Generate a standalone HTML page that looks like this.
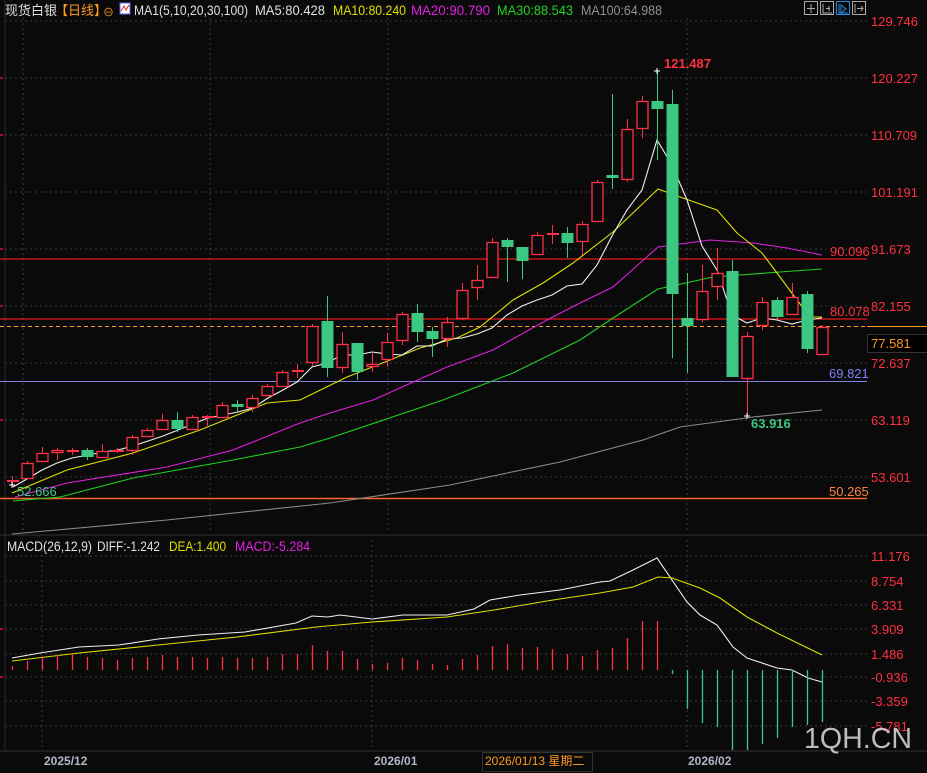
<!DOCTYPE html>
<html><head><meta charset="utf-8"><style>
html,body{margin:0;padding:0;background:#0a0a0a;width:927px;height:773px;overflow:hidden}
svg{display:block}
text{font-family:"Liberation Sans","Noto Sans CJK SC",sans-serif}
</style></head><body>
<svg id="s" width="927" height="773" viewBox="0 0 927 773" xmlns="http://www.w3.org/2000/svg">
<rect width="927" height="773" fill="#0a0a0a"/>
<g stroke="#3a3a3a" stroke-dasharray="2,3" stroke-width="1">
<line x1="5" y1="21" x2="867" y2="21"/><line x1="5" y1="78" x2="867" y2="78"/>
<line x1="5" y1="135" x2="867" y2="135"/><line x1="5" y1="192" x2="867" y2="192"/>
<line x1="5" y1="249" x2="867" y2="249"/><line x1="5" y1="306" x2="867" y2="306"/>
<line x1="5" y1="363" x2="867" y2="363"/><line x1="5" y1="420" x2="867" y2="420"/>
<line x1="5" y1="477" x2="867" y2="477"/>
<line x1="5" y1="556" x2="867" y2="556"/><line x1="5" y1="581" x2="867" y2="581"/>
<line x1="5" y1="605" x2="867" y2="605"/><line x1="5" y1="629" x2="867" y2="629"/>
<line x1="5" y1="654" x2="867" y2="654"/><line x1="5" y1="677" x2="867" y2="677"/>
<line x1="5" y1="701" x2="867" y2="701"/><line x1="5" y1="726" x2="867" y2="726"/>
<line x1="23" y1="18" x2="23" y2="530"/><line x1="210" y1="18" x2="210" y2="530"/><line x1="388" y1="18" x2="388" y2="530"/><line x1="687" y1="18" x2="687" y2="530"/>
<line x1="42" y1="540" x2="42" y2="750"/><line x1="372" y1="540" x2="372" y2="750"/><line x1="687" y1="540" x2="687" y2="750"/>
</g>
<line x1="5" y1="0" x2="5" y2="750" stroke="#2a2a2a"/>
<line x1="0" y1="535" x2="927" y2="535" stroke="#333"/>
<line x1="0" y1="751" x2="927" y2="751" stroke="#333"/>
<g fill="#b01020"><rect x="0" y="77" width="3" height="2"/><rect x="0" y="134" width="3" height="2"/><rect x="0" y="248" width="3" height="2"/><rect x="0" y="305" width="3" height="2"/><rect x="0" y="419" width="3" height="2"/><rect x="0" y="628" width="3" height="2"/><rect x="0" y="676" width="3" height="2"/></g>

<line x1="0" y1="259" x2="867" y2="259" stroke="#e81818" stroke-width="1.3"/>
<line x1="0" y1="319" x2="867" y2="319" stroke="#e81818" stroke-width="1.3"/>
<line x1="0" y1="326.5" x2="867" y2="326.5" stroke="#ff9a20" stroke-dasharray="4,3"/>
<line x1="867" y1="326.5" x2="927" y2="326.5" stroke="#ff9a20"/>
<line x1="0" y1="381.5" x2="867" y2="381.5" stroke="#8080e0"/>
<line x1="0" y1="498.5" x2="867" y2="498.5" stroke="#ff6030" stroke-width="1.5"/>

<g id="ma" fill="none" stroke-width="1.1"></g>
<g id="cd"></g>
<g id="mb"></g>

<g font-size="13" fill="#ff3040">
<text x="871" y="26">129.746</text><text x="871" y="83">120.227</text>
<text x="871" y="140">110.709</text><text x="871" y="197">101.191</text>
<text x="871" y="254">91.673</text><text x="871" y="311">82.155</text>
<text x="871" y="368">72.637</text><text x="871" y="425">63.119</text>
<text x="871" y="482">53.601</text>
<text x="871" y="561">11.176</text><text x="871" y="586">8.754</text>
<text x="871" y="610">6.331</text><text x="871" y="634">3.909</text>
<text x="871" y="659">1.486</text><text x="871" y="682">-0.936</text>
<text x="871" y="706">-3.359</text><text x="871" y="731">-5.781</text>
<text x="830" y="256">90.096</text><text x="830" y="316">80.078</text>
<text x="664" y="68" font-weight="bold">121.487</text>
</g>
<text x="829" y="378" font-size="13" fill="#8080ff">69.821</text>
<text x="829" y="496" font-size="13" fill="#ff8040">50.265</text>
<text x="751" y="428" font-size="13" fill="#3cc882" font-weight="bold">63.916</text>
<text x="17" y="496" font-size="13" fill="#3cc882">52.666</text>
<rect x="867.5" y="334.5" width="60" height="18" fill="#000" stroke="#333"/>
<text x="871" y="348" font-size="13" fill="#ff9a20">77.581</text>

<text x="5" y="15" font-size="13" fill="#e0e0e0">现货白银</text>
<text x="55" y="15" font-size="13" fill="#ff9a20">【日线】</text>
<text x="103" y="16" font-size="11" fill="#ff9a20">⊖</text>
<rect x="120" y="3" width="10" height="11" fill="#fff" stroke="#6060ff"/><path d="M121 11 L124 6 L126 10 L129 5" stroke="#e02020" fill="none"/>
<g font-size="13.5">
<text x="134" y="15" fill="#e0e0e0" textLength="114" lengthAdjust="spacingAndGlyphs">MA1(5,10,20,30,100)</text>
<text x="255" y="15" fill="#e0e0e0" textLength="70" lengthAdjust="spacingAndGlyphs">MA5:80.428</text>
<text x="333" y="15" fill="#e0e000" textLength="73" lengthAdjust="spacingAndGlyphs">MA10:80.240</text>
<text x="411" y="15" fill="#e020e0" textLength="79" lengthAdjust="spacingAndGlyphs">MA20:90.790</text>
<text x="497" y="15" fill="#20d020" textLength="76" lengthAdjust="spacingAndGlyphs">MA30:88.543</text>
<text x="581" y="15" fill="#909090" textLength="81" lengthAdjust="spacingAndGlyphs">MA100:64.988</text>
<text x="7" y="551" fill="#e0e0e0" textLength="85" lengthAdjust="spacingAndGlyphs">MACD(26,12,9)</text>
<text x="97" y="551" fill="#e0e0e0" textLength="63" lengthAdjust="spacingAndGlyphs">DIFF:-1.242</text>
<text x="169" y="551" fill="#e0e000" textLength="57" lengthAdjust="spacingAndGlyphs">DEA:1.400</text>
<text x="235" y="551" fill="#e020e0" textLength="75" lengthAdjust="spacingAndGlyphs">MACD:-5.284</text>
</g>
<g fill="none" stroke="#aaa">
<rect x="804.5" y="1.5" width="13" height="13"/><path d="M811 4v9M807 8.5h8"/>
<rect x="820.5" y="1.5" width="13" height="13"/><path d="M823 4v9h9M826 8.5h4M829 6v5"/>
<rect x="836.5" y="1.5" width="13" height="13" stroke="#2a8ae0"/><path d="M839 4v9h9M841 5l5 4-5 4z" stroke="#2a8ae0"/>
<rect x="852.5" y="1.5" width="13" height="13"/><path d="M855 4v9M857 8.5h6M861 6l2 2.5-2 2.5"/>
</g>
<g font-size="12" font-weight="bold" fill="#b0b8c8">
<text x="44" y="765">2025/12</text><text x="374" y="765">2026/01</text><text x="688" y="765">2026/02</text>
</g>
<rect x="482.5" y="752.5" width="110" height="19" fill="#0a0a0a" stroke="#333"/>
<text x="485" y="765" font-size="12" fill="#ff9a20">2026/01/13 星期二</text>
<text x="804" y="748" font-size="29" fill="#dcdcdc" fill-opacity="0.85" textLength="108" lengthAdjust="spacingAndGlyphs">1QH.CN</text>
</svg>
<script>
var NS="http://www.w3.org/2000/svg";
function el(p,t,a){var e=document.createElementNS(NS,t);for(var k in a)e.setAttribute(k,a[k]);p.appendChild(e);return e;}
var ma=document.getElementById('ma');
function pl(c,pts){el(ma,'polyline',{points:pts,stroke:c});}
pl('#8a8a8a','12,534 167,520 330,503 450,485 560,462 643,440 680,427 753,417 822,410');
pl('#20d020','13,501 60,497 133,478 233,460 300,447 330,438 443,400 513,373 580,340 613,318 658,289 713,277 780,272 822,269');
pl('#e020e0','15,497 67,483 167,467 233,450 300,423 330,413 373,400 447,367 493,350 547,320 580,303 613,287 658,247 710,240 753,243 787,248 822,255');
pl('#e0e000','12,493 67,470 133,453 200,430 267,403 300,400 347,377 390,360 420,348 457,338 480,327 513,300 543,283 573,263 613,232 658,189 680,197 717,210 737,233 762,253 780,277 797,300 810,317 822,317');
pl('#f0f0f0','13,487 27,479 42,470 57,463 72,458 88,455 103,452 118,450 133,446 148,441 163,436 178,430 193,424 208,418 223,415 238,412 253,408 268,398 283,390 297,382 312,367 327,363 342,355 357,355 372,352 387,354 402,355 417,346 432,346 447,339 462,338 477,334 492,328 507,315 522,306 537,300 552,295 567,286 582,284 597,265 612,236 627,210 642,190 657,140 672,165 687,200 702,246 717,270 732,315 747,323 762,318 777,320 792,324 807,320 822,318');
pl('#f0f0f0','12,658 40,653 79,647 119,645 158,639 198,635 245,632 296,623 312,616 328,617 340,615 372,619 403,615 447,615 474,609 490,600 520,595 560,590 600,582 610,581 633,570 657,558 687,602 700,615 717,625 733,647 747,658 777,668 792,670 808,678 822,682');
pl('#e0e000','12,661 79,653 158,645 237,637 316,627 372,622 447,617 494,610 553,600 600,593 633,587 658,577 672,578 700,588 720,598 747,617 777,633 822,655');
var C=[['r',480,482,476,486],['r',463,479,461,479],['r',453,462,447,462],['r',450,453,448,460],['r',450,452,448,455],['g',450,457,448,460],['r',451,458,444,458],['r',450,452,448,453],['r',437,451,435,455],['r',430,437,428,437],['r',420,430,414,430],['g',420,429,412,432],['r',417,430,415,430],['r',416,418,415,426],['r',405,418,402,418],['g',404,407,400,412],['r',398,408,395,412],['r',386,396,384,396],['r',372,387,370,387],['r',370,372,364,378],['r',326,363,324,366],['g',321,368,296,377],['r',344,368,332,373],['g',343,372,343,380],['r',364,367,353,372],['r',342,360,333,367],['r',314,341,312,345],['g',313,332,304,342],['g',331,339,327,357],['r',322,339,317,347],['r',290,319,283,320],['r',280,288,265,300],['r',242,278,238,278],['g',240,247,238,282],['g',247,261,247,279],['r',235,255,232,255],['r',233,235,225,244],['g',233,243,227,258],['r',224,242,221,255],['r',182,222,180,222],['g',175,178,94,189],['r',129,180,119,182],['r',101,129,96,138],['g',101,109,71,160],['g',104,294,90,358],['g',318,326,273,373],['r',291,320,265,322],['r',273,287,248,300],['g',271,377,260,377],['r',336,379,332,416],['r',302,326,297,330],['g',300,317,297,319],['r',297,315,283,315],['g',294,349,291,353],['r',327,355,325,355]];
var cd=document.getElementById('cd');
C.forEach(function(c,i){var x=12+i*15;var col=c[0]=='r'?'#ff3048':'#3cc882';
 el(cd,'line',{x1:x+.5,y1:c[3],x2:x+.5,y2:c[4],stroke:col});
 var h=c[2]-c[1];
 if(c[0]=='r'){ if(h<=2) el(cd,'rect',{x:x-5,y:c[1],width:12,height:Math.max(h,2),fill:col});
  else el(cd,'rect',{x:x-5,y:c[1]+.5,width:11,height:h-1,fill:'#0a0a0a',stroke:col,'stroke-width':1.3});}
 else el(cd,'rect',{x:x-5.5,y:c[1],width:12,height:Math.max(h,2),fill:col});
});
el(cd,'path',{d:'M654 71h6M657 68v6M744 416h6M747 413v6',stroke:'#fff'});
el(cd,'path',{d:'M9 485h6M12 482v6',stroke:'#fff'});
var T=[666,661,657,655,654,657,658,660,658,657,655,657,657,658,657,658,658,657,654,654,645,651,651,659,664,663,658,660,664,665,659,655,646,644,648,647,649,654,656,650,648,638,621,621];
var mb=document.getElementById('mb');
T.forEach(function(t,i){var x=12+i*15+.5;el(mb,'line',{x1:x,y1:t,x2:x,y2:670,stroke:'#ff3048','stroke-width':1.3});});
var G=[674,709,723,727,750,750,744,738,727,725,722];
G.forEach(function(b,j){var x=12+(44+j)*15+.5;el(mb,'line',{x1:x,y1:670,x2:x,y2:b,stroke:'#3cc882','stroke-width':1.3});});
</script>
</body></html>
